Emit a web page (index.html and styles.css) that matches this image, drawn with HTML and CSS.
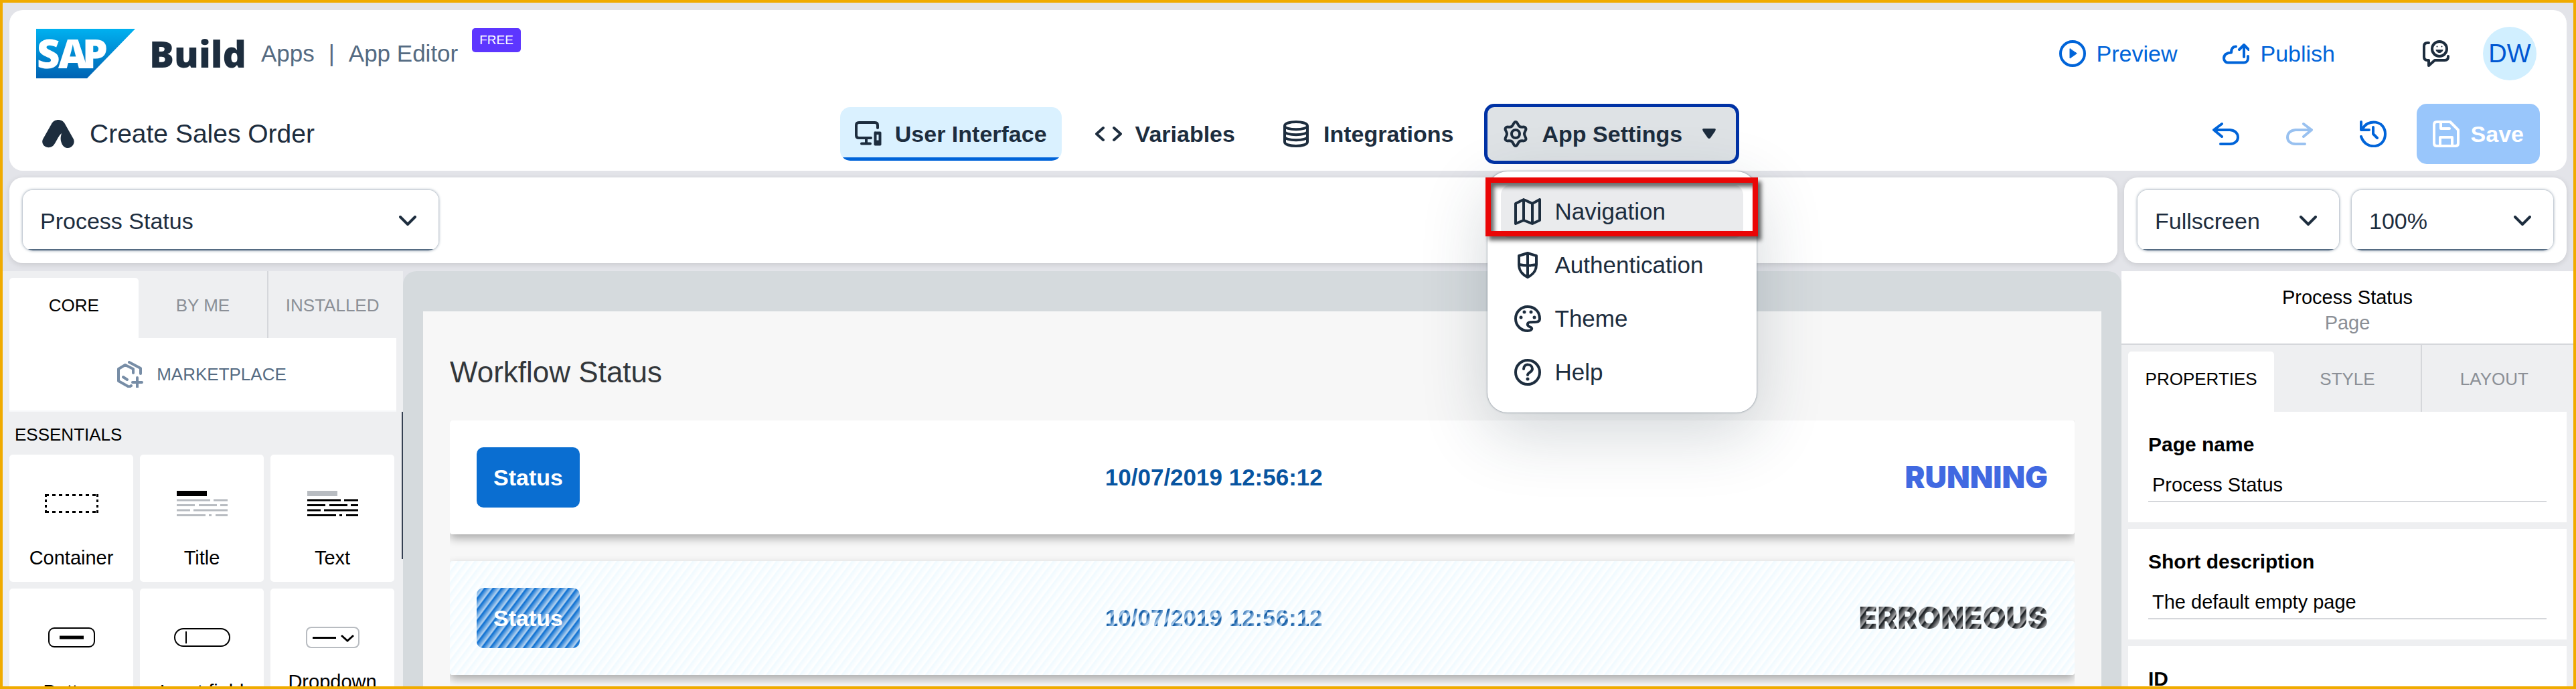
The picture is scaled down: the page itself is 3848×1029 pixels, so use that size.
FILE: index.html
```html
<!DOCTYPE html>
<html lang="en">
<head>
<meta charset="utf-8">
<title>SAP Build Apps - Create Sales Order</title>
<link rel="stylesheet" href="styles.css">
</head>
<body>
<div class="app">
  <header class="header">
    <div class="shell">
      <div class="brand">
        <svg class="logo" width="148" height="74" viewBox="0 0 148 74" role="img" aria-label="SAP">
          <defs><linearGradient id="sapBlue" x1="0" y1="0" x2="0" y2="1"><stop offset="0" stop-color="#00b1f0"/><stop offset="1" stop-color="#0062b3"/></linearGradient></defs>
          <path d="M0 0H148L76 74H0Z" fill="url(#sapBlue)"/>
          <text class="logo-text" x="1 33 69" y="59">SAP</text>
        </svg>
        <span class="product">Build</span>
        <a class="crumb" href="#apps">Apps</a>
        <span class="crumb">|</span>
        <a class="crumb" href="#editor">App Editor</a>
        <span class="badge">FREE</span>
      </div>
      <div class="shell-actions">
        <button class="link-btn" type="button">
          <svg class="icon" viewBox="0 0 40 40"><circle cx="20" cy="20" r="18"/><path class="fill" d="M16 13v14l10-7z"/></svg>Preview</button>
        <button class="link-btn" type="button">
          <svg class="icon" viewBox="0 0 40 40"><path d="M20 9.500c-5 0-7 4-7 9-6 0-11 3-11 8.500 0 4 3 6.500 6 6.500h24c4 0 6-3 6-6.500v-3M32 25V7M25 14l7-7 7 7"/></svg>Publish</button>
        <button class="icon-btn dark" type="button" aria-label="Feedback">
          <svg class="icon" viewBox="0 0 40 40"><circle cx="25" cy="13" r="11"/><path d="M20 15c2 5 8 5 10 0z" class="fill"/><circle class="dot" cx="21.500" cy="9.500" r="1"/><circle class="dot" cx="28.500" cy="9.500" r="1"/><path d="M9 4H7Q2 4 2 9v16q0 5 5 5h2v8l9-8h15q5 0 5-5v-1"/></svg></button>
        <button class="avatar" type="button">DW</button>
      </div>
    </div>
    <div class="project">
      <div class="project-name">
        <svg class="app-mark" width="48" height="42" viewBox="0 0 48 42"><path d="M14 6C18-2 30-2 34 6l13 23c4 10-11 19-17 8-3-6-3-10-1-17-5 4-8 13-12 18C9 46-3 38 1 29z"/></svg>
        <span>Create Sales Order</span>
      </div>
      <nav class="tabs-main">
        <button class="nav-btn active" type="button">
          <svg class="icon" viewBox="0 0 40 40"><path d="M34 11V7q0-4-4-4H6Q2 3 2 7v15q0 4 4 4h18M17 26v8M10 34.500h13"/><path class="fill" fill-rule="evenodd" d="M30 17h8q1 0 1 1v18q0 1-1 1h-8q-1 0-1-1V18q0-1 1-1zm2 4v9h4v-9z"/></svg>User Interface</button>
        <button class="nav-btn" type="button">
          <svg class="icon" viewBox="0 0 40 40"><path d="M12 11L2 20l10 9M28 11l10 9-10 9"/></svg>Variables</button>
        <button class="nav-btn" type="button">
          <svg class="icon" viewBox="0 0 40 40"><path d="M2 8c0-8 34-8 34 0v24c0 8-34 8-34 0zc0 7 34 7 34 0M2 16c0 7 34 7 34 0M2 24c0 7 34 7 34 0"/></svg>Integrations</button>
        <div class="menu-host">
          <button class="nav-btn open" type="button" aria-expanded="true">
            <svg class="icon" viewBox="0 0 40 40"><circle cx="20" cy="20" r="6"/><path d="M20 2c3 0 3 5 6 7s7-1 9 2-2 5-2 9 4 6 2 9-6 0-9 2-3 7-6 7-3-5-6-7-7 1-9-2 2-5 2-9-4-6-2-9 6 0 9-2 3-7 6-7z"/></svg>App Settings
            <svg class="caret" width="20" height="16" viewBox="0 0 20 16"><path d="M2 0h16q3 0 1 4l-7 10q-2 2-4 0L1 4q-2-4 1-4z"/></svg></button>
          <div class="menu">
            <button class="menu-item hover" type="button">
              <svg class="icon" viewBox="0 0 40 40"><path d="M2 8l12-6 13 6 11-6v31l-11 5-13-5-12 5zM14 2v31M27 8v30"/></svg>Navigation</button>
            <button class="menu-item" type="button">
              <svg class="icon" viewBox="0 0 40 40"><path d="M20 2l13 4v13c0 10-5 15-13 19C12 34 7 29 7 19V6zM20 2v36M7 19q13 3 26 0"/></svg>Authentication</button>
            <button class="menu-item" type="button">
              <svg class="icon" viewBox="0 0 40 40"><path d="M38 20C38 9 30 2 20 2S2 10 2 20s8 18 18 18c7 0 7-4 5-5s-6-2-5-5c0-3 4-3 8-3 6 0 10 0 10-5z"/><circle class="dot" cx="15" cy="10" r="2.500"/><circle class="dot" cx="25" cy="10" r="2.500"/><circle class="dot" cx="10" cy="18" r="2.500"/><circle class="dot" cx="30" cy="18" r="2.500"/></svg>Theme</button>
            <button class="menu-item" type="button">
              <svg class="icon" viewBox="0 0 40 40"><circle cx="20" cy="20" r="18"/><path d="M14 15c0-9 13-8 13 0 0 5-7 5-7 9"/><circle class="dot" cx="20" cy="30" r="2.500"/></svg>Help</button>
            <div class="callout"></div>
          </div>
        </div>
      </nav>
      <div class="project-actions">
        <button class="icon-btn" type="button" aria-label="Undo">
          <svg class="icon" viewBox="0 0 40 40"><path d="M14 5L2 14l12 10M2 14h24c16 1 16 21 0 21H12"/></svg></button>
        <button class="icon-btn faded" type="button" aria-label="Redo" disabled>
          <svg class="icon" viewBox="0 0 40 40"><path d="M26 5l12 9-12 10M38 14H14c-16 1-16 21 0 21h14"/></svg></button>
        <button class="icon-btn" type="button" aria-label="History">
          <svg class="icon" viewBox="0 0 40 40"><path d="M2 2v12h12M4 13C11-3 38-1 38 20c0 22-29 25-36 4M20 10v10l6 6"/></svg></button>
        <button class="save" type="button" disabled>
          <svg class="icon" viewBox="0 0 40 40"><path d="M6 2h20l12 12v20q0 4-4 4H6q-4 0-4-4V6q0-4 4-4zM12 2v10h13M11 38V25h18v13"/></svg>Save</button>
      </div>
    </div>
  </header>

  <div class="toolbar">
    <div class="toolbar-main">
      <div class="picker wide"><select aria-label="Page"><option>Process Status</option></select>
        <svg class="chevron" width="26" height="16" viewBox="0 0 26 16"><path d="M2 2l11 11L24 2"/></svg></div>
    </div>
    <div class="toolbar-view">
      <div class="picker"><select aria-label="Screen size"><option>Fullscreen</option></select>
        <svg class="chevron" width="26" height="16" viewBox="0 0 26 16"><path d="M2 2l11 11L24 2"/></svg></div>
      <div class="picker"><select aria-label="Zoom"><option>100%</option></select>
        <svg class="chevron" width="26" height="16" viewBox="0 0 26 16"><path d="M2 2l11 11L24 2"/></svg></div>
    </div>
  </div>

  <main class="workspace">
    <aside class="palette">
      <div class="tabs">
        <button class="tab active" type="button">CORE</button>
        <button class="tab" type="button">BY ME</button>
        <button class="tab" type="button">INSTALLED</button>
      </div>
      <button class="market" type="button">
        <svg width="40" height="40" viewBox="0 0 40 40"><path d="M19 2l17 9v8M25 18v-6L13 6 3 12v18l16 9 3-2M10 24l6 4M31 25v14M24 32h14"/></svg>MARKETPLACE</button>
      <div class="palette-list">
        <h2>ESSENTIALS</h2>
        <div class="tiles">
          <div class="tile"><svg width="80" height="28" viewBox="0 0 80 28"><path d="M1 1.500h78M1 26.500h78" stroke-dasharray="5 5" stroke-width="3"/><path d="M1.500 0v28M78.500 0v28" stroke-dasharray="4 4" stroke-width="3"/></svg><span>Container</span></div>
          <div class="tile"><svg width="76" height="38" viewBox="0 0 76 38"><path d="M0 4h45" stroke-width="8"/><path class="grey" d="M0 14h50m5 0h21M0 21.500h27m6 0h27m5 0h11M0 29h20m5 0h51M0 36.500h43m5 0h4m6 0h18" stroke-width="3"/></svg><span>Title</span></div>
          <div class="tile"><svg width="76" height="38" viewBox="0 0 76 38"><path class="grey" d="M0 4h45" stroke-width="8"/><path d="M0 14h50m5 0h21M0 21.500h27m6 0h27m5 0h11M0 29h20m5 0h51M0 36.500h43m5 0h4m6 0h18" stroke-width="3"/></svg><span>Text</span></div>
          <div class="tile"><svg width="70" height="30" viewBox="0 0 70 30"><rect x="1" y="1" width="68" height="28" rx="8" stroke-width="2"/><path d="M17 15h36" stroke-width="5"/></svg><span>Button</span></div>
          <div class="tile"><svg width="84" height="28" viewBox="0 0 84 28"><rect x="1" y="1" width="82" height="26" rx="13" stroke-width="2"/><path d="M18 5v18" stroke-width="2"/></svg><span>Input field</span></div>
          <div class="tile"><svg width="80" height="32" viewBox="0 0 80 32"><rect class="grey" x="1" y="1" width="78" height="30" rx="7" stroke-width="2"/><path d="M10 16.500h35M53 13l9 8 9-8" stroke-width="3"/></svg><span>Dropdown field</span></div>
        </div>
        <div class="scroll-thumb"></div>
      </div>
    </aside>

    <section class="canvas">
      <div class="page">
        <h1>Workflow Status</h1>
        <div class="rows">
          <div class="row">
            <button class="status" type="button">Status</button>
            <time>10/07/2019 12:56:12</time>
            <strong class="running">RUNNING</strong>
          </div>
          <div class="row repeat">
            <button class="status" type="button">Status</button>
            <time>10/07/2019 12:56:12</time>
            <strong class="erroneous">ERRONEOUS</strong>
          </div>
        </div>
      </div>
    </section>

    <aside class="inspector">
      <div class="inspector-head"><div>Process Status</div><div class="muted">Page</div></div>
      <div class="tabs">
        <button class="tab active" type="button">PROPERTIES</button>
        <button class="tab" type="button">STYLE</button>
        <button class="tab" type="button">LAYOUT</button>
      </div>
      <div class="fields">
        <div class="field"><label for="page-name">Page name</label><input id="page-name" type="text" value="Process Status"></div>
        <div class="field"><label for="short-desc">Short description</label><input id="short-desc" type="text" value="The default empty page"></div>
        <div class="field"><label for="page-id">ID</label><input id="page-id" type="text"></div>
      </div>
    </aside>
  </main>
</div>
</body>
</html>
```
FILE: styles.css
```css
* { box-sizing: border-box; }

body {
  margin: 0;
  font-family: "Liberation Sans", Arial, sans-serif;
  font-size: 34px;
  color: #1d2d3e;
}

button, select, input { font: inherit; color: inherit; }
button { border: 0; padding: 0; background: none; white-space: nowrap; }
h1, h2 { margin: 0; font-weight: 400; }

.app {
  display: flex;
  flex-direction: column;
  height: 100vh;
  overflow: hidden;
  border: 4px solid #f0ab00;
  background: #e3e4e9;
}

.icon {
  flex: none;
  width: 40px;
  height: 40px;
  fill: none;
  stroke: currentColor;
  stroke-width: 4;
  stroke-linecap: round;
  stroke-linejoin: round;
}
.icon .fill { fill: currentColor; stroke-width: 1; }
.icon .dot { fill: currentColor; stroke: none; }

/* Header */
.header {
  position: relative;
  z-index: 2;
  margin: 11px 10px 0;
  padding: 0 40px;
  border-radius: 20px;
  background: #fff;
}
.shell {
  display: flex;
  justify-content: space-between;
  align-items: center;
  height: 130px;
  padding-right: 5px;
}
.brand { display: flex; align-items: center; align-self: stretch; }
.logo { margin-right: 21px; }
.logo-text { font: 800 60px "Open Sans", sans-serif; fill: #fff; }
.product { margin-right: 22px; font: 900 55px/60px "Noto Sans", sans-serif; }
.crumb { margin-right: 21px; color: #556b82; font-size: 35px; text-decoration: none; }
.badge {
  align-self: flex-start;
  margin-top: 27px;
  padding: 0 11px;
  border-radius: 5px;
  background: #5d36ff;
  color: #fff;
  font-size: 19px;
  line-height: 36px;
}
.shell-actions, .project-actions { display: flex; align-items: center; }
.link-btn {
  display: flex;
  align-items: center;
  gap: 16px;
  margin-right: 68px;
  color: #0064d9;
}
.link-btn + .icon-btn { margin-left: 63px; }
.icon-btn { display: flex; margin-right: 70px; color: #0064d9; }
.icon-btn.dark { color: #1d2d3e; }
.icon-btn.faded { color: #99c1f0; }
.icon-btn:nth-child(3) { margin-right: 45px; }
.shell-actions .icon-btn { margin-right: 50px; }
.avatar {
  width: 80px;
  height: 80px;
  border-radius: 50%;
  background: #d1efff;
  color: #0057d2;
  font-size: 38px;
}

.project {
  display: grid;
  grid-template-columns: 1fr auto 1fr;
  align-items: center;
  height: 110px;
}
.project-name { display: flex; align-items: center; gap: 23px; padding-left: 9px; font-size: 39px; }
.app-mark { fill: #1d2d3e; }
.tabs-main { display: flex; align-items: center; gap: 28px; }
.nav-btn {
  display: flex;
  align-items: center;
  gap: 20px;
  height: 80px;
  padding: 0 22px;
  border-radius: 15px;
  font-weight: 700;
}
.nav-btn.active { background: linear-gradient(#daf1ff 75px, #0064d9 75px); }
.nav-btn.open {
  background: #dee2e5;
  box-shadow: 0 0 0 5px #0032a5;
  padding-right: 30px;
  border-radius: 10px;
}
.caret { margin-left: 10px; fill: #1d2d3e; }
.project-actions { justify-content: flex-end; }
.save {
  display: flex;
  align-items: center;
  gap: 17px;
  height: 90px;
  padding: 0 24px;
  border-radius: 15px;
  background: #99c6fb;
  color: #fff;
  font-weight: 700;
}

/* Drop-down menu */
.menu-host { position: relative; }
.menu {
  position: absolute;
  top: 96px;
  left: 0;
  width: 402px;
  padding: 20px;
  border-radius: 30px;
  background: #fff;
  box-shadow: 0 0 3px rgba(34, 53, 72, .6), 0 30px 100px rgba(34, 53, 72, .2);
}
.menu-item {
  display: flex;
  align-items: center;
  gap: 21px;
  width: 100%;
  height: 80px;
  padding: 0 20px;
  border-radius: 15px;
  font-size: 35px;
}
.menu-item.hover { background: #eaebed; }
.callout {
  position: absolute;
  top: 9px;
  left: -3px;
  width: 407px;
  height: 88px;
  border: 8px solid #ea0606;
  box-shadow: 5px 6px 6px rgba(0, 0, 0, .6), inset 5px 6px 6px rgba(0, 0, 0, .6);
}

/* Toolbar */
.toolbar { display: flex; gap: 10px; margin: 10px 10px 0; }
.toolbar-main, .toolbar-view {
  display: flex;
  gap: 19px;
  padding: 19px 20px;
  border-radius: 20px;
  background: #fff;
  box-shadow: 0 2px 8px rgba(0, 0, 0, .12);
}
.toolbar-main { flex: 1; }
.picker { position: relative; width: 301px; }
.picker.wide { width: 621px; }
.picker select {
  display: block;
  width: 100%;
  height: 90px;
  padding: 2px 26px 0;
  border: 0;
  border-radius: 15px;
  appearance: none;
  background: linear-gradient(#fff 88px, #556b82 88px);
  box-shadow: 0 0 4px rgba(85, 107, 130, .8);
}
.chevron {
  position: absolute;
  top: 38px;
  right: 33px;
  fill: none;
  stroke: #1d2d3e;
  stroke-width: 4;
  stroke-linecap: round;
  stroke-linejoin: round;
  pointer-events: none;
}

/* Workspace */
.workspace {
  flex: 1;
  display: grid;
  grid-template-columns: 598px 1fr 675px;
  min-height: 0;
  margin-top: 12px;
  overflow: hidden;
}
.palette, .inspector { background: #eeeff1; color: #000; }
.tabs { display: grid; grid-template-columns: repeat(3, 1fr); height: 100px; padding: 0 10px; }
.tab { padding-top: 2px; color: #8b8f96; font-size: 26px; }
.tab + .tab + .tab { border-left: 2px solid #d5d7db; }
.tab.active {
  margin-top: 10px;
  padding-bottom: 10px;
  border-radius: 5px 5px 0 0;
  background: #fff;
  color: #000;
}
.market {
  display: flex;
  align-items: center;
  justify-content: center;
  gap: 20px;
  width: 578px;
  height: 110px;
  margin: 0 10px;
  padding-right: 4px;
  border-bottom: 2px solid #f7f8f9;
  background: #fff;
  color: #556b82;
  font-size: 26px;
}
.market svg { fill: none; stroke: #778da6; stroke-width: 4; stroke-linecap: round; stroke-linejoin: round; }
.palette-list { position: relative; padding: 0 10px; }
.palette-list h2 { padding: 2px 0 0 8px; height: 64px; font-size: 26px; line-height: 64px; }
.tiles { display: grid; grid-template-columns: repeat(3, 185px); gap: 10px; }
.tile {
  display: grid;
  grid-template-rows: 60px 58px;
  gap: 22px;
  place-items: center;
  height: 190px;
  padding-top: 43px;
  border-radius: 5px;
  background: #fff;
  text-align: center;
  font-size: 29px;
  line-height: 29px;
}
.tile svg { fill: none; stroke: #000; }
.tile .grey { stroke: #b8bcc1; }
.scroll-thumb { position: absolute; top: 0; right: 0; width: 2px; height: 220px; background: #354052; }

.canvas { padding: 60px 30px 0; border-radius: 20px 20px 0 0; background: #d5dadd; }
.page { padding: 60px 40px 0; background: #f7f7f7; }
.page h1 { height: 103px; color: #32363a; font-size: 44px; line-height: 62px; }
.rows { display: grid; gap: 40px; padding-bottom: 60px; clip-path: inset(0); }
.row {
  display: grid;
  grid-template-columns: 40% 1fr auto;
  align-items: center;
  height: 170px;
  padding: 0 40px;
  border-radius: 4px;
  background: #fff;
  box-shadow: 0 6px 14px rgba(0, 0, 0, .32);
}
.status {
  justify-self: start;
  height: 90px;
  padding: 0 25px;
  border-radius: 10px;
  background: #0a6ed1;
  color: #fff;
  font-weight: 700;
}
.row time { color: #0854a0; font-size: 35px; font-weight: 700; }
.row strong { font: 900 45px/60px Inter, sans-serif; }
.row .running { color: #4169e1; }
.row.repeat { background: repeating-linear-gradient(127deg, #f0faff 0, #fff 8px, #f0faff 10px); }
.repeat .status { background: repeating-linear-gradient(127deg, #0a6ed1 0, #b5d3f0 8px, #0a6ed1 10px); }
.repeat time, .repeat .erroneous { color: transparent; background-clip: text; }
.repeat time {
  justify-self: start;
  background-image: repeating-linear-gradient(127deg, #0854a0 0, #b5d3f0 8px, #0854a0 10px);
}
.repeat .erroneous { background-image: repeating-linear-gradient(127deg, #14191d 0, #a5a5a7 8px, #14191d 10px); }

/* Inspector */
.inspector-head {
  height: 110px;
  padding-top: 20px;
  border-bottom: 2px solid #d5d7db;
  background: #fff;
  text-align: center;
  font-size: 29px;
  line-height: 38px;
}
.muted { color: #8b8f96; }
.fields { display: grid; gap: 10px; padding: 0 10px; }
.field { height: 165px; padding: 33px 30px 0; background: #fff; }
.field label { display: block; font-size: 30px; font-weight: 700; line-height: 32px; }
.field input {
  width: 100%;
  height: 50px;
  margin-top: 20px;
  padding: 0 6px;
  border: 0;
  border-bottom: 2px solid #d5d7db;
  font-size: 29px;
}
```
